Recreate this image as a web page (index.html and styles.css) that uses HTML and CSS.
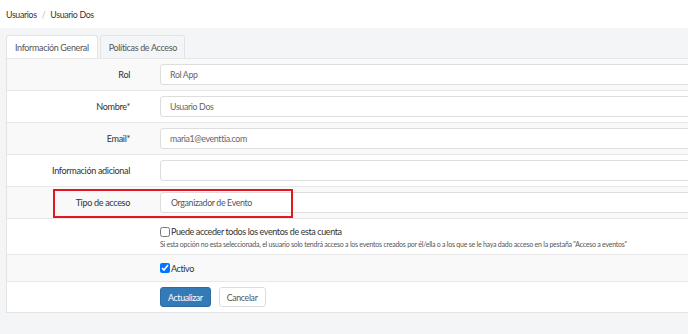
FILE: index.html
```html
<!DOCTYPE html>
<html lang="es">
<head>
  <meta charset="UTF-8">
  <meta name="viewport" content="width=device-width, initial-scale=1.0">
  <title>Usuario Dos</title>
  <link rel="stylesheet" href="styles.css">
</head>
<body>

  <div class="topbar">
    <span class="crumb">Usuarios</span>
    <span class="sep">/</span>
    <span class="crumb">Usuario Dos</span>
  </div>

  <div class="main">
    <div class="tabs">
      <div class="tab active">Información General</div>
      <div class="tab">Políticas de Acceso</div>
    </div>

    <form class="panel">
      <div class="row">
        <label class="label">Rol</label>
        <div class="field"><input class="input" type="text" value="Rol App"></div>
      </div>
      <div class="row">
        <label class="label">Nombre*</label>
        <div class="field"><input class="input" type="text" value="Usuario Dos"></div>
      </div>
      <div class="row">
        <label class="label">Email*</label>
        <div class="field"><input class="input" type="text" value="maria1@eventtia.com"></div>
      </div>
      <div class="row">
        <label class="label">Información adicional</label>
        <div class="field"><input class="input" type="text" value=""></div>
      </div>
      <div class="row">
        <label class="label">Tipo de acceso</label>
        <div class="field">
          <select class="input select">
            <option>Organizador de Evento</option>
          </select>
        </div>
        <div class="highlight"></div>
      </div>
      <div class="row check-row">
        <div class="label"></div>
        <div class="field">
          <label class="check"><input type="checkbox"> Puede acceder todos los eventos de esta cuenta</label>
          <p class="help">Si esta opción no esta seleccionada, el usuario solo tendrá acceso a los eventos creados por él/ella o a los que se le haya dado acceso en la pestaña "Acceso a eventos"</p>
        </div>
      </div>
      <div class="row active-row">
        <div class="label"></div>
        <div class="field">
          <label class="check"><input type="checkbox" checked> Activo</label>
        </div>
      </div>
      <div class="row buttons">
        <div class="label"></div>
        <div class="field actions">
          <button class="btn btn-primary" type="button">Actualizar</button>
          <button class="btn" type="button">Cancelar</button>
        </div>
      </div>
    </form>
  </div>

</body>
</html>
```

FILE: styles.css
```css
body {
  font-family: Lato, "Open Sans", sans-serif;
  margin: 0;
  background: #f4f5f7;
  color: #333;
  overflow: hidden;
  height: 334px;
  letter-spacing: -0.35px;
}
.topbar {
  background: #fff;
  height: 28px;
  padding-left: 6px;
  display: flex;
  align-items: center;
  gap: 5px;
  font-size: 8.8px;
}
.sep {
  color: #bbb;
}
.main {
  padding: 7px 0 0 6px;
  width: 900px;
}
.tabs {
  display: flex;
  gap: 2px;
}
.tab {
  height: 23px;
  box-sizing: border-box;
  padding: 0 8px;
  display: flex;
  align-items: center;
  font-size: 9px;
  color: #555;
  border: 1px solid #e3e3e3;
  border-bottom: none;
  border-radius: 3px 3px 0 0;
  background: #f4f5f7;
}
.tab.active {
  background: #fff;
}
.tab + .tab {
  padding: 0 7px 0 8px;
}
.panel {
  background: #fff;
  border: 1px solid #e3e3e3;
  border-top: none;
  margin: 0;
}
.row {
  display: flex;
  align-items: center;
  height: 32px;
  border-top: 1px solid #e8e8e8;
  box-sizing: border-box;
  position: relative;
}
.row:nth-child(odd) {
  background: #f9f9f9;
}
.label {
  width: 153px;
  flex: none;
  box-sizing: border-box;
  padding-right: 30px;
  text-align: right;
  font-size: 9.1px;
  color: #333;
}
.field {
  flex: 1;
}
.input {
  display: block;
  width: 100%;
  height: 21px;
  box-sizing: border-box;
  border: 1px solid #ddd;
  border-radius: 3px;
  padding: 0 9px;
  font-family: inherit;
  font-size: 8.8px;
  letter-spacing: -0.35px;
  color: #666;
  background: #fff;
}
.select {
  appearance: none;
  padding-left: 10px;
  color: #555;
}
.highlight {
  position: absolute;
  left: 46px;
  top: 2px;
  width: 240px;
  height: 29px;
  box-sizing: border-box;
  border: 2px solid #e3171f;
  pointer-events: none;
}
.check-row {
  height: 36px;
  align-items: flex-start;
  padding-top: 7px;
}
.active-row {
  height: 27px;
}
.buttons {
  height: 31px;
}
.check {
  display: flex;
  align-items: center;
  gap: 1px;
  font-size: 9px;
  letter-spacing: -0.4px;
  color: #333;
}
.check input {
  margin: 0;
  width: 10px;
  height: 10px;
}
.help {
  margin: 3px 0 0;
  font-size: 7px;
  letter-spacing: -0.24px;
  color: #555;
}
.actions {
  display: flex;
  gap: 8px;
}
.btn {
  height: 20px;
  padding: 0 7px;
  font-family: inherit;
  font-size: 8.8px;
  letter-spacing: -0.35px;
  color: #555;
  background: #fff;
  border: 1px solid #ddd;
  border-radius: 3px;
}
.btn-primary {
  background: #337ab7;
  border-color: #2e6da4;
  color: #fff;
}
```
